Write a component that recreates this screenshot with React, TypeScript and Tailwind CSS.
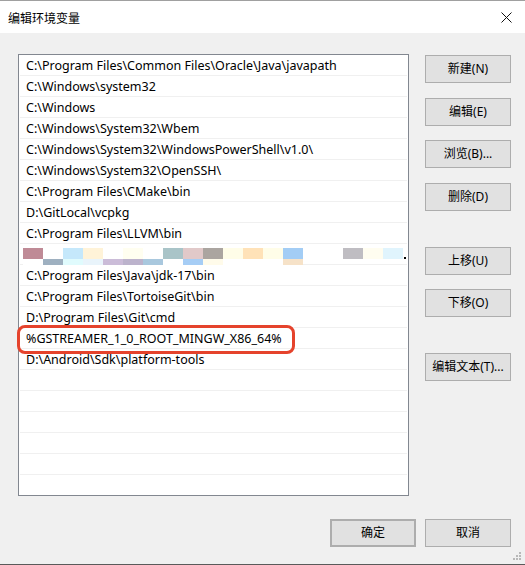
const paths = [
  "C:\\Program Files\\Common Files\\Oracle\\Java\\javapath",
  "C:\\Windows\\system32",
  "C:\\Windows",
  "C:\\Windows\\System32\\Wbem",
  "C:\\Windows\\System32\\WindowsPowerShell\\v1.0\\",
  "C:\\Windows\\System32\\OpenSSH\\",
  "C:\\Program Files\\CMake\\bin",
  "D:\\GitLocal\\vcpkg",
  "C:\\Program Files\\LLVM\\bin",
  "",
  "C:\\Program Files\\Java\\jdk-17\\bin",
  "C:\\Program Files\\TortoiseGit\\bin",
  "D:\\Program Files\\Git\\cmd",
  "%GSTREAMER_1_0_ROOT_MINGW_X86_64%",
  "D:\\Android\\Sdk\\platform-tools",
  "",
  "",
  "",
  "",
  "",
  "",
];

// mosaic of the redacted entry, 20px cells
const mosaicTop = [
  "#bf8a96", "#ffffff", "#c5e8fb", "#fff3d8", "#ffffff", "#fffef0", "#ffffff",
  "#a9c4c8", "#e1c9c9", "#aba5a0", "#fffde8", "#ffe2b8", "#fffde8", "#a3cdf5",
  "#ffffff", "#ffffff", "#bfbdc2", "#fffdf0", "#e0f4fd",
];
const mosaicBottom = [
  "#ffffff", "#9eb0c0", "#e0fbfd", "#e9f4fb", "#cbbcd8", "#bcb3cc", "#a9c8de",
  "#ffffff", "#a6cdf5", "#fffbea", "#ffffff", "#ffffff", "#ffffff", "#f6e2c8",
];

function Mosaic() {
  return (
    <div className="flex flex-col pt-[4px] -ml-[3px]">
      <div className="flex h-[11px]">
        {mosaicTop.map((c, i) => (
          <div key={i} className="w-[20px] h-full" style={{ backgroundColor: c }} />
        ))}
        <div className="w-[2px] h-[2px] bg-black self-end ml-px" />
      </div>
      <div className="flex h-[6px]">
        {mosaicBottom.map((c, i) => (
          <div key={i} className="w-[20px] h-full" style={{ backgroundColor: c }} />
        ))}
      </div>
    </div>
  );
}

function Btn({ label, className = "" }: { label: string; className?: string }) {
  return (
    <button
      className={`w-[86px] h-[28px] bg-[#e1e1e1] border border-[#adadad] text-[12px] text-black flex items-center justify-center ${className}`}
    >
      {label}
    </button>
  );
}

export default function App() {
  return (
    <div className="w-[525px] h-[565px] flex flex-col bg-[#f0f0f0] border-t border-t-[#a0a0a0] border-b border-b-[#5a5a5a] font-['Noto_Sans','Noto_Sans_CJK_SC',sans-serif] text-black relative overflow-hidden">
      {/* title bar */}
      <div className="h-[32px] bg-white flex items-center justify-between pl-[8px] pr-[13px] shrink-0">
        <span className="text-[12px] font-['Noto_Sans_CJK_SC',sans-serif] pt-px">编辑环境变量</span>
        <svg width="11" height="11" viewBox="0 0 11 11">
          <path d="M0.5 0.5 L10.5 10.5 M10.5 0.5 L0.5 10.5" stroke="#111" strokeWidth="1" />
        </svg>
      </div>

      <div className="flex pt-[21px] pl-[18px]">
        {/* path list */}
        <div className="relative w-[391px] h-[442px] bg-white border border-[#828790]">
          <div className="h-full overflow-hidden">
            {paths.map((p, i) => (
              <div
                key={i}
                className={`h-[21px] mx-px border-b border-[#f0f0f0] flex items-center pl-[6px] text-[12.5px] whitespace-nowrap ${i === 9 ? "" : "pt-[3px]"}`}
              >
                {i === 9 ? <Mosaic /> : p}
              </div>
            ))}
          </div>
          {/* red annotation */}
          <div className="absolute left-[-2px] top-[270px] w-[278px] h-[29px] border-[3px] border-[#e5432c] rounded-[8px] pointer-events-none" />
        </div>

        {/* side buttons */}
        <div className="flex flex-col ml-[16px] pt-px">
          <Btn label="新建(N)" />
          <Btn label="编辑(E)" className="mt-[15px]" />
          <Btn label="浏览(B)..." className="mt-[14px]" />
          <Btn label="删除(D)" className="mt-[15px]" />
          <Btn label="上移(U)" className="mt-[36px]" />
          <Btn label="下移(O)" className="mt-[14px]" />
          <Btn label="编辑文本(T)..." className="mt-[36px]" />
        </div>
      </div>

      {/* bottom buttons */}
      <div className="flex justify-end gap-[9px] pr-[14px] mt-[23px]">
        <Btn label="确定" className="border-2 border-[#0078d7]" />
        <Btn label="取消" />
      </div>

      {/* resize grip */}
      <svg className="absolute right-[3px] bottom-[3px]" width="9" height="9" viewBox="0 0 9 9">
        <g fill="#b8b8b8">
          <rect x="6" y="0" width="2" height="2" />
          <rect x="3" y="3" width="2" height="2" />
          <rect x="6" y="3" width="2" height="2" />
          <rect x="0" y="6" width="2" height="2" />
          <rect x="3" y="6" width="2" height="2" />
          <rect x="6" y="6" width="2" height="2" />
        </g>
      </svg>
    </div>
  );
}
